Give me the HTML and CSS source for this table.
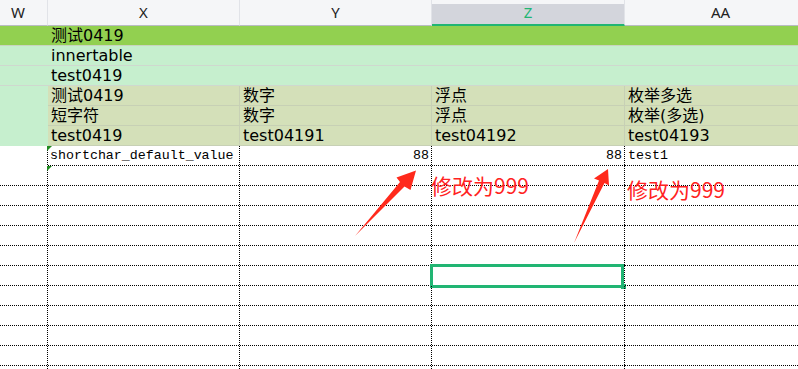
FILE: index.html
```html
<!DOCTYPE html>
<html lang="zh">
<head>
<meta charset="utf-8">
<title>Sheet</title>
<link rel="stylesheet" href="styles.css">
</head>
<body>
<div class="sheet">
  <div class="cols hrow">
    <div class="hc hw">W</div>
    <div class="hc">X</div>
    <div class="hc">Y</div>
    <div class="hc hsel">Z</div>
    <div class="hc">AA</div>
  </div>

  <div class="band green"><div class="bt">测试0419</div></div>
  <div class="band lg"><div class="bt">innertable</div></div>
  <div class="band lg"><div class="bt">test0419</div></div>

  <div class="cols fields">
    <div class="fw"></div>
    <div class="fcol"><div class="fc">测试0419</div><div class="fc">短字符</div><div class="fc">test0419</div></div>
    <div class="fcol"><div class="fc">数字</div><div class="fc">数字</div><div class="fc">test04191</div></div>
    <div class="fcol"><div class="fc">浮点</div><div class="fc">浮点</div><div class="fc">test04192</div></div>
    <div class="fcol"><div class="fc">枚举多选</div><div class="fc">枚举(多选)</div><div class="fc">test04193</div></div>
  </div>

  <div class="data">
    <div class="cols drow">
      <div class="dc nob"></div>
      <div class="dc mark">shortchar_default_value</div>
      <div class="dc num">88</div>
      <div class="dc num">88</div>
      <div class="dc last">test1</div>
    </div>
    <div class="cols drow">
      <div class="dc"></div><div class="dc mark"></div><div class="dc"></div><div class="dc"></div><div class="dc last"></div>
    </div>
    <div class="cols drow">
      <div class="dc"></div><div class="dc"></div><div class="dc"></div><div class="dc"></div><div class="dc last"></div>
    </div>
    <div class="cols drow">
      <div class="dc"></div><div class="dc"></div><div class="dc"></div><div class="dc"></div><div class="dc last"></div>
    </div>
    <div class="cols drow">
      <div class="dc"></div><div class="dc"></div><div class="dc"></div><div class="dc"></div><div class="dc last"></div>
    </div>
    <div class="cols drow">
      <div class="dc"></div><div class="dc"></div><div class="dc"></div><div class="dc"></div><div class="dc last"></div>
    </div>
    <div class="cols drow">
      <div class="dc"></div><div class="dc"></div><div class="dc"></div><div class="dc selected"><div class="sel"><span class="handle"></span></div></div><div class="dc last"></div>
    </div>
    <div class="cols drow">
      <div class="dc"></div><div class="dc"></div><div class="dc"></div><div class="dc"></div><div class="dc last"></div>
    </div>
    <div class="cols drow">
      <div class="dc"></div><div class="dc"></div><div class="dc"></div><div class="dc"></div><div class="dc last"></div>
    </div>
    <div class="cols drow">
      <div class="dc"></div><div class="dc"></div><div class="dc"></div><div class="dc"></div><div class="dc last"></div>
    </div>
    <div class="cols drow">
      <div class="dc"></div><div class="dc"></div><div class="dc"></div><div class="dc"></div><div class="dc last"></div>
    </div>
    <div class="cols drow">
      <div class="dc"></div><div class="dc"></div><div class="dc"></div><div class="dc"></div><div class="dc last"></div>
    </div>
  </div>

  <div class="notes">
    <svg class="arrows" width="798" height="369" viewBox="0 0 798 369">
      <polygon points="355,236 400,182 396.5,177.5 416,170.5 410.5,190 404.5,186.5" fill="#ff2a1c"/>
      <polygon points="574,243 599,180.5 594,178.5 608,169 609,185.5 604.5,183" fill="#ff2a1c"/>
    </svg>
    <span class="note n1">修改为999</span>
    <span class="note n2">修改为999</span>
  </div>
</div>
</body>
</html>
```

FILE: styles.css
```css
html, body {
  margin: 0;
  padding: 0;
  background: #ffffff;
  overflow: hidden;
}

.sheet {
  position: relative;
  width: 798px;
  height: 369px;
  overflow: hidden;
  font-family: "DejaVu Sans", "Noto Sans CJK SC", sans-serif;
  color: #000;
}

.cols {
  display: grid;
  grid-template-columns: 48px 192px 192px 193px 192px;
  width: 817px;
}

/* column header */
.hrow {
  height: 26px;
  background: #f5f6f8;
}
.hc {
  box-sizing: border-box;
  height: 26px;
  border-right: 1px solid #e1e3e8;
  border-bottom: 1px solid #b9bcc2;
  font-family: "Noto Sans", "DejaVu Sans", sans-serif;
  font-size: 15px;
  line-height: 25px;
  color: #222;
  text-align: center;
}
.hw {
  text-align: left;
  padding-left: 11px;
}
.hsel {
  background: linear-gradient(#f5f6f8 0 4px, #d3d5dc 4px);
  border-bottom: 2px solid #21b573;
  color: #21b573;
}

/* title bands */
.band {
  height: 19px;
  border-bottom: 1px solid #cfd8cf;
  padding-left: 51px;
  font-size: 16px;
  line-height: 19px;
  white-space: nowrap;
}
.green { background: #92d050; border-bottom-color: #c9d4c0; }
.lg { background: #c6efce; }

/* field definitions */
.fields {
  height: 60px;
}
.fw {
  background: #c6efce;
}
.fcol {
  display: flex;
  flex-direction: column;
  background: #d4e0b9;
  border-right: 1px solid #c7d0b5;
}
.fc {
  height: 19px;
  border-bottom: 1px solid #c7d0b5;
  padding-left: 3px;
  font-size: 16px;
  line-height: 19px;
  white-space: nowrap;
}

/* data grid: 1px-on / 1px-off dotted gridlines */
.drow {
  height: 20px;
}
.dc {
  position: relative;
  box-sizing: border-box;
  height: 20px;
  padding: 0 3px 1px 2px;
  background:
    linear-gradient(to right, #000 50%, transparent 50%) left bottom / 2px 1px repeat-x,
    linear-gradient(#000 50%, transparent 50%) right top / 1px 2px repeat-y;
  font-family: "Liberation Mono", "DejaVu Sans Mono", monospace;
  font-size: 13.3px;
  line-height: 19px;
  white-space: nowrap;
}
.dc.last {
  padding-left: 3px;
  background: linear-gradient(to right, #000 50%, transparent 50%) left bottom / 2px 1px repeat-x;
}
.dc.nob {
  background: linear-gradient(#000 50%, transparent 50%) right top / 1px 2px repeat-y;
}
.dc.num { text-align: right; }

.mark::before {
  content: "";
  position: absolute;
  left: -1px;
  top: 0;
  border-top: 5px solid #1f8a1f;
  border-right: 5px solid transparent;
}

.sel {
  position: absolute;
  left: -2px;
  top: -2px;
  right: 1px;
  bottom: -2px;
  border: 3px solid #21b573;
  box-sizing: border-box;
}
.handle {
  position: absolute;
  right: -5px;
  bottom: -4px;
  width: 5px;
  height: 5px;
  background: #21b573;
}

/* annotations */
.notes {
  position: absolute;
  left: 0;
  top: 0;
  width: 798px;
  height: 369px;
  pointer-events: none;
}
.arrows {
  display: block;
}
.note {
  position: absolute;
  font-family: "Noto Sans CJK SC", sans-serif;
  font-size: 21px;
  line-height: 22px;
  color: #ff2222;
  white-space: nowrap;
}
.n1 { left: 431px; top: 174px; }
.n2 { left: 627px; top: 178px; }
```
